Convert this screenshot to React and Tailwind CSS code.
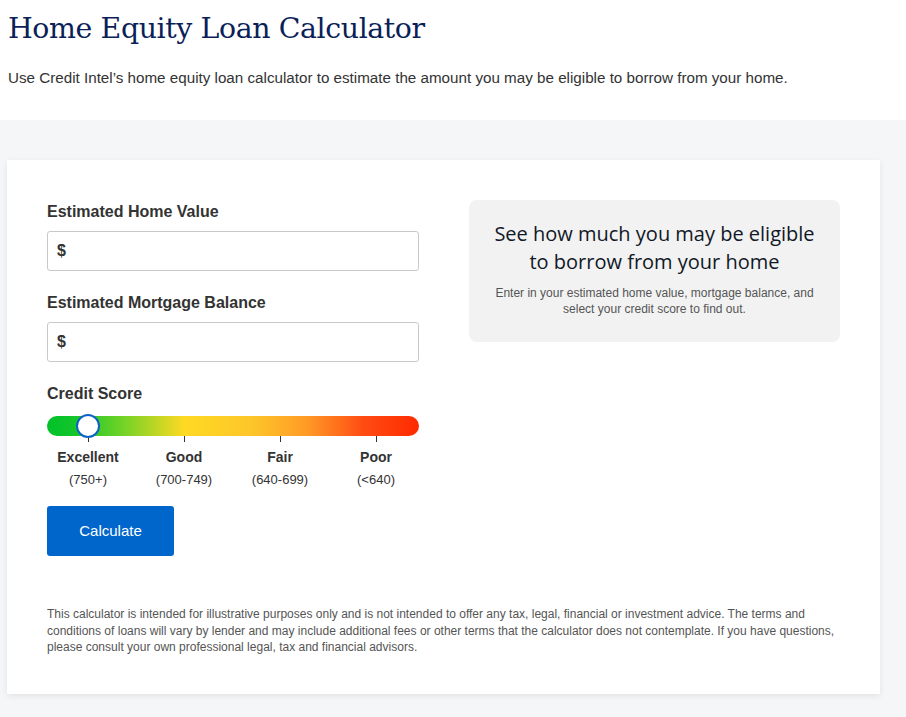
import React from "react";

const bands = [
  { name: "Excellent", range: "(750+)" },
  { name: "Good", range: "(700-749)" },
  { name: "Fair", range: "(640-699)" },
  { name: "Poor", range: "(<640)" },
];

function MoneyField({ label }) {
  return (
    <div className="flex flex-col">
      <label className="text-[16px] font-bold text-[#333] leading-[20px] mb-[9px]">{label}</label>
      <div className="flex items-center h-[40px] w-[372px] border border-[#c9c9c9] rounded-[3px] px-[9px]">
        <span className="text-[16px] font-bold text-[#333]">$</span>
        <input className="flex-1 outline-none bg-transparent ml-1 text-[16px]" />
      </div>
    </div>
  );
}

export default function App() {
  return (
    <div className="min-h-[717px] bg-white" style={{ fontFamily: '"Liberation Sans", Arial, sans-serif' }}>
      <header className="bg-white px-[8px] pt-[10px] h-[120px]">
        <h1
          className="text-[28.4px] leading-[38px] text-[#0b1f58]"
          style={{ fontFamily: '"DejaVu Serif", Georgia, serif', letterSpacing: "-0.4px" }}
        >
          Home Equity Loan Calculator
        </h1>
        <p className="mt-[20px] text-[15.2px] leading-[20px] text-[#333]">
          Use Credit Intel’s home equity loan calculator to estimate the amount you may be eligible to borrow from your home.
        </p>
      </header>

      <main className="bg-[#f5f6f8] pt-[40px] pb-[24px] pl-[7px] pr-[26px]">
        <section className="bg-white shadow-[0_2px_6px_rgba(0,0,0,0.08)] px-[40px] pt-[42px] pb-[38px]">
          <div className="flex gap-[50px]">
            <div className="flex flex-col w-[372px]">
              <MoneyField label="Estimated Home Value" />
              <div className="h-[22px]" />
              <MoneyField label="Estimated Mortgage Balance" />

              <div className="mt-[22px] text-[16px] font-bold text-[#333] leading-[20px]">Credit Score</div>
              <div className="relative mt-[12px] h-[20px] w-[372px] rounded-full bg-[linear-gradient(90deg,#00c12a_0%,#12c52a_7%,#6fd227_20%,#ffd923_37%,#fdc62a_55%,#ff9a26_70%,#ff4c12_85%,#ff2a00_100%)]">
                <div className="absolute left-[29px] top-[-2px] h-[24px] w-[24px] rounded-full bg-white border-2 border-[#0b63c5]" />
              </div>
              <div className="flex justify-between pl-[41px] pr-[43px]">
                {bands.map((b) => (
                  <div key={b.name} className="w-0 flex flex-col items-center">
                    <div className="h-[6px] w-px shrink-0 bg-[#333]" />
                    <div className="mt-[7px] text-[14px] font-bold text-[#333] leading-[16px] whitespace-nowrap">{b.name}</div>
                    <div className="mt-[7px] text-[13px] text-[#333] leading-[16px] whitespace-nowrap">{b.range}</div>
                  </div>
                ))}
              </div>

              <button className="mt-[18px] w-[127px] h-[50px] bg-[#0066cc] rounded-[3px] text-white text-[15px]">
                Calculate
              </button>
            </div>

            <div className="-mt-[2px]">
              <div className="w-[371px] h-[142px] rounded-[8px] bg-[#f2f2f2] flex flex-col items-center pt-[20px] px-[10px] text-center">
                <h2
                  className="text-[20px] leading-[28px] text-[#111827]"
                  style={{ fontFamily: '"Open Sans", Inter, sans-serif' }}
                >
                  See how much you may be eligible
                  <br />
                  to borrow from your home
                </h2>
                <p className="mt-[9px] text-[12px] leading-[16px] text-[#555]">
                  Enter in your estimated home value, mortgage balance, and
                  <br />
                  select your credit score to find out.
                </p>
              </div>
            </div>
          </div>

          <p className="mt-[50px] text-[12px] leading-[16.5px] text-[#555] pr-[2px]">
            This calculator is intended for illustrative purposes only and is not intended to offer any tax, legal, financial or investment advice. The terms and conditions of loans will vary by lender and may include additional fees or other terms that the calculator does not contemplate. If you have questions, please consult your own professional legal, tax and financial advisors.
          </p>
        </section>
      </main>
    </div>
  );
}
